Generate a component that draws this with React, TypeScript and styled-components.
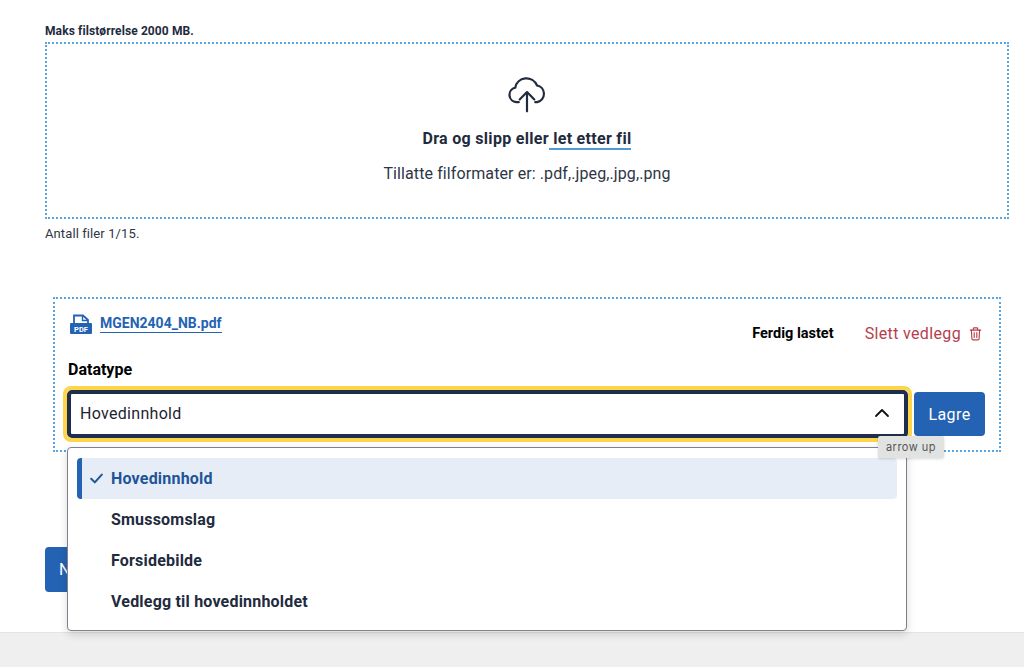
import React from 'react';
import styled, { createGlobalStyle } from 'styled-components';

const GlobalStyle = createGlobalStyle`
  html, body {
    margin: 0;
    padding: 0;
    background: #fff;
    font-family: Roboto, "Liberation Sans", sans-serif;
    color: #222b3d;
  }
  * { box-sizing: border-box; }
`;

const Page = styled.div`
  position: relative;
  width: 1024px;
  height: 667px;
  overflow: hidden;
  display: flex;
  flex-direction: column;
`;

const Main = styled.main`
  height: 632px;
  padding: 24px 15px 0 45px;
`;

const Footer = styled.footer`
  flex: 1;
  background: #efefef;
  border-top: 1px solid #e4e4e4;
`;

/*--- UPLOAD ---*/

const MaxSize = styled.div`
  font-size: 12px;
  line-height: 15px;
  font-weight: 700;
  height: 18px;
  letter-spacing: 0.1px;
`;

const DropZone = styled.div`
  width: 964px;
  height: 177px;
  border: 2px dotted #5aa5e0;
  display: flex;
  flex-direction: column;
  align-items: center;
  padding-top: 27px;
`;

const DropTitle = styled.div`
  margin-top: 13px;
  font-size: 16px;
  line-height: 22px;
  font-weight: 700;
  letter-spacing: 0.3px;
  white-space: pre;
`;

const BrowseLink = styled.span`
  border-bottom: 2px solid #4f9bd9;
`;

const Formats = styled.div`
  margin-top: 13px;
  font-size: 16px;
  line-height: 22px;
  letter-spacing: 0.1px;
  color: #2e3646;
`;

const FileCount = styled.div`
  margin-top: 7px;
  font-size: 13px;
  line-height: 16px;
  letter-spacing: 0.1px;
  color: #2e3646;
`;

/*--- ATTACHMENT ---*/

const Attachment = styled.section`
  width: 948px;
  height: 155px;
  margin: 55px 0 0 8px;
  border: 2px dotted #5aa5e0;
  padding: 15px 17px 0 10px;
`;

const FileRow = styled.div`
  display: flex;
  align-items: flex-start;
  height: 34px;
`;

const FileLink = styled.a`
  display: flex;
  align-items: center;
  gap: 8px;
  margin-left: 5px;
  color: #2463b3;
  font-size: 14px;
  font-weight: 700;
`;

const FileName = styled.span`
  border-bottom: 1px solid #2463b3;
  line-height: 17px;
`;

const Status = styled.div`
  margin: 11px 31px 0 auto;
  font-size: 14.5px;
  line-height: 18px;
  font-weight: 700;
  color: #000;
`;

const DeleteLink = styled.div`
  display: flex;
  align-items: center;
  gap: 8px;
  margin-top: 10px;
  font-size: 16px;
  line-height: 20px;
  letter-spacing: 0.35px;
  color: #b5404d;
`;

const FieldLabel = styled.div`
  margin: 12px 0 0 3px;
  height: 26px;
  font-size: 16px;
  line-height: 20px;
  font-weight: 700;
  color: #000;
`;

const FieldRow = styled.div`
  display: flex;
  align-items: center;
  gap: 2px;
  margin-left: -2px;
`;

const SelectBox = styled.div`
  flex: none;
  width: 849px;
  height: 56px;
  border: 4px solid #fdd54a;
  border-radius: 8px;
  background: #fff;
  display: flex;
`;

const SelectInner = styled.div`
  flex: 1;
  border: 4px solid #1f2e4a;
  border-radius: 5px;
  display: flex;
  align-items: center;
  justify-content: space-between;
  padding: 0 14px 2px 9px;
  font-size: 16px;
  letter-spacing: 0.3px;
  color: #1d2433;
`;

const SaveButton = styled.button`
  flex: none;
  width: 71px;
  height: 44px;
  border: 0;
  border-radius: 4px;
  background: #2463b3;
  color: #fff;
  font: 400 16px Roboto, sans-serif;
  letter-spacing: 0.4px;
`;

const NextButton = styled.button`
  display: block;
  width: 90px;
  height: 45px;
  margin-top: 95px;
  padding-left: 14px;
  border: 0;
  border-radius: 4px;
  background: #2463b3;
  color: #fff;
  text-align: left;
  font: 400 16px Roboto, sans-serif;
`;

/*--- OVERLAYS ---*/

const Menu = styled.ul`
  position: absolute;
  left: 67px;
  top: 447px;
  width: 840px;
  height: 184px;
  margin: 0;
  padding: 10px 9px;
  list-style: none;
  background: #fff;
  border: 1px solid #7d828c;
  border-radius: 4px;
  box-shadow: 0 3px 8px rgba(0, 0, 0, 0.16);
`;

const MenuItem = styled.li<{ $selected?: boolean }>`
  display: flex;
  align-items: center;
  height: 41px;
  padding-left: ${p => (p.$selected ? '8px' : '34px')};
  gap: 8px;
  border-radius: 4px;
  font-size: 16px;
  font-weight: 700;
  letter-spacing: 0.2px;
  color: ${p => (p.$selected ? '#1f5499' : '#222b3d')};
  background: ${p => (p.$selected ? '#e6edf6' : 'transparent')};
  border-left: ${p => (p.$selected ? '5px solid #2463b3' : '0')};
`;

const Tooltip = styled.div`
  position: absolute;
  left: 878px;
  top: 436px;
  width: 66px;
  height: 22px;
  display: flex;
  align-items: center;
  justify-content: center;
  background: #e1e2e2;
  border-radius: 2px;
  box-shadow: 0 1px 3px rgba(0, 0, 0, 0.15);
  font-family: Inter, sans-serif;
  font-size: 11px;
  letter-spacing: 0.5px;
  color: #555;
`;

const CloudIcon = () => (
  <svg width="44" height="44" viewBox="0 0 24 24" fill="none" stroke="#222b3d" strokeWidth="1.2" strokeLinecap="round" strokeLinejoin="round">
    <path d="M12 22v-10" />
    <path d="M8 15.5l4-4 4 4" />
    <path d="M7.5 17H6.2A4 4 0 0 1 5.6 9.1 6.2 6.2 0 0 1 17.4 7.8 4.7 4.7 0 0 1 17.6 17H16.5" />
  </svg>
);

const PdfIcon = () => (
  <svg width="22" height="20" viewBox="0 0 22 20">
    <path d="M4 9V1.5h9l5 4.5v3" fill="none" stroke="#2463b3" strokeWidth="1.8" />
    <path d="M12.5 1v5.5H18" fill="none" stroke="#2463b3" strokeWidth="1.4" />
    <rect x="0" y="9" width="22" height="11" rx="1" fill="#2463b3" />
    <text x="11" y="17.5" textAnchor="middle" fontSize="7.5" fontWeight="700" fill="#fff" fontFamily="Roboto, sans-serif">PDF</text>
  </svg>
);

const TrashIcon = () => (
  <svg width="13" height="14" viewBox="0 0 14 16" fill="none" stroke="#b5404d" strokeWidth="1.3" strokeLinecap="round" strokeLinejoin="round">
    <path d="M1 3.5h12" />
    <path d="M4.5 3.5V2a1 1 0 0 1 1-1h3a1 1 0 0 1 1 1v1.5" />
    <path d="M2.3 3.5l.6 10a1.3 1.3 0 0 0 1.3 1.2h5.6a1.3 1.3 0 0 0 1.3-1.2l.6-10" />
    <path d="M5.5 6.5v5.5M8.5 6.5v5.5" />
  </svg>
);

const ChevronUp = () => (
  <svg width="16" height="10" viewBox="0 0 16 10" fill="none" stroke="#111" strokeWidth="1.8" strokeLinecap="round" strokeLinejoin="round">
    <path d="M2 8l6-6 6 6" />
  </svg>
);

const CheckIcon = () => (
  <svg width="13" height="11" viewBox="0 0 13 11" fill="none" stroke="#1f5499" strokeWidth="2" strokeLinecap="round" strokeLinejoin="round">
    <path d="M1.2 5.8l3.6 3.6 7-7.8" />
  </svg>
);

export default function App() {
  return (
    <Page>
      <GlobalStyle />
      <Main>
        <MaxSize>Maks filstørrelse 2000 MB.</MaxSize>
        <DropZone>
          <CloudIcon />
          <DropTitle>
            Dra og slipp eller<BrowseLink> let etter fil</BrowseLink>
          </DropTitle>
          <Formats>Tillatte filformater er: .pdf,.jpeg,.jpg,.png</Formats>
        </DropZone>
        <FileCount>Antall filer 1/15.</FileCount>
        <Attachment>
          <FileRow>
            <FileLink>
              <PdfIcon />
              <FileName>MGEN2404_NB.pdf</FileName>
            </FileLink>
            <Status>Ferdig lastet</Status>
            <DeleteLink>
              Slett vedlegg
              <TrashIcon />
            </DeleteLink>
          </FileRow>
          <FieldLabel>Datatype</FieldLabel>
          <FieldRow>
            <SelectBox>
              <SelectInner>
                Hovedinnhold
                <ChevronUp />
              </SelectInner>
            </SelectBox>
            <SaveButton>Lagre</SaveButton>
          </FieldRow>
        </Attachment>
        <NextButton>Neste</NextButton>
      </Main>
      <Footer />
      <Menu>
        <MenuItem $selected>
          <CheckIcon />
          Hovedinnhold
        </MenuItem>
        <MenuItem>Smussomslag</MenuItem>
        <MenuItem>Forsidebilde</MenuItem>
        <MenuItem>Vedlegg til hovedinnholdet</MenuItem>
      </Menu>
      <Tooltip>arrow up</Tooltip>
    </Page>
  );
}
